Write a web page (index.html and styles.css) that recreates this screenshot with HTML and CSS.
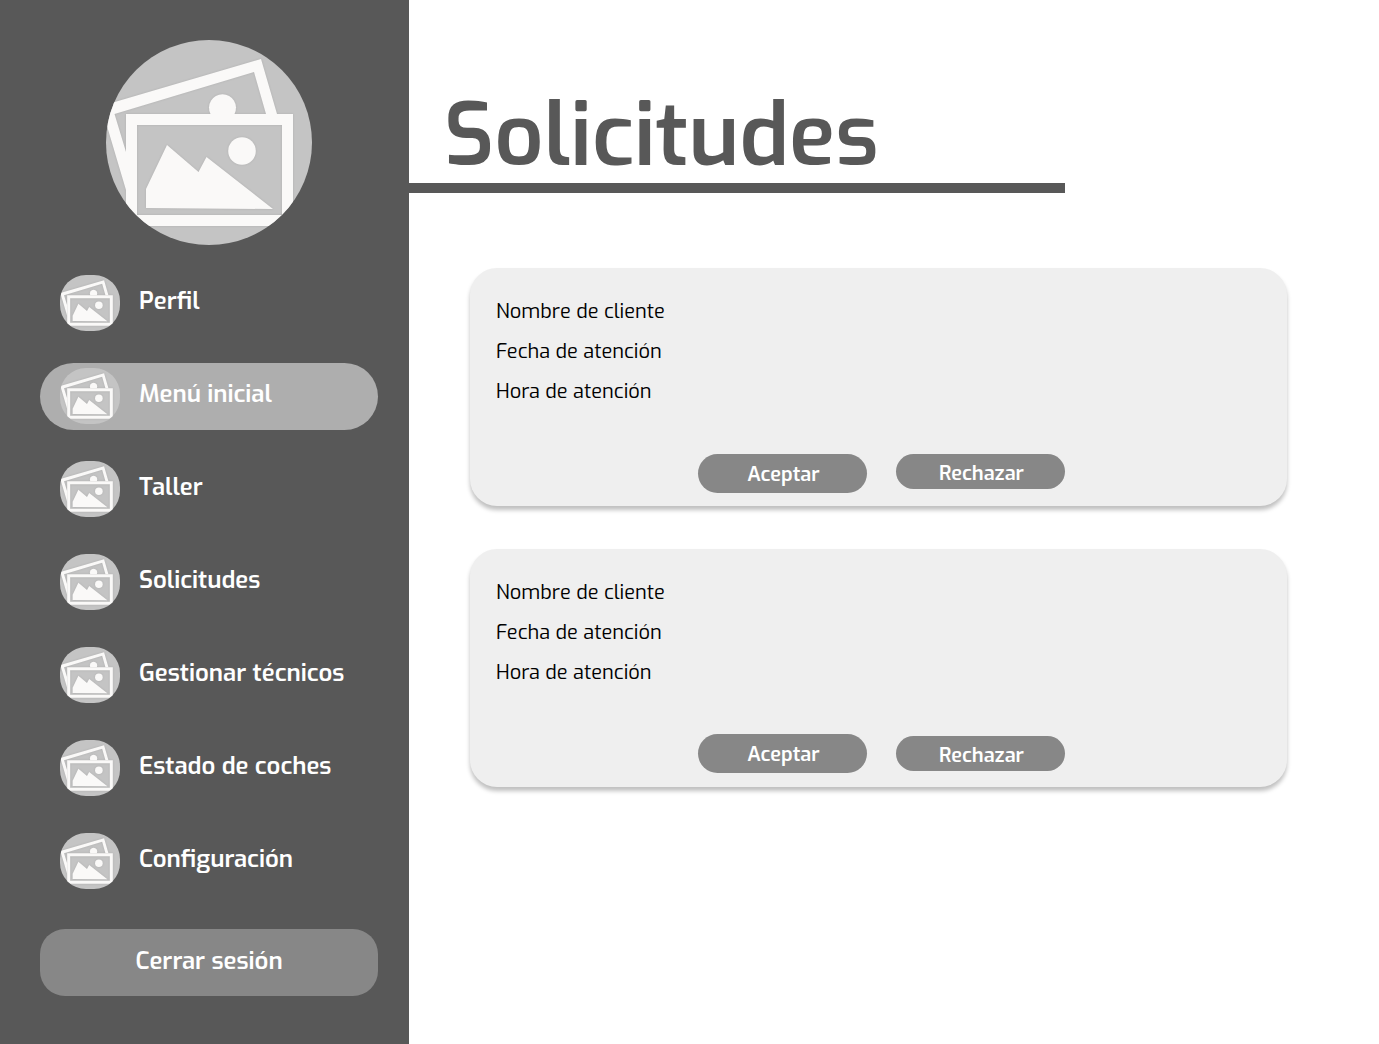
FILE: index.html
```html
<!DOCTYPE html>
<html lang="es">
<head>
<meta charset="utf-8">
<meta name="viewport" content="width=device-width, initial-scale=1">
<title>Solicitudes</title>
<link rel="stylesheet" href="styles.css">
</head>
<body>
<svg class="sprite" aria-hidden="true">
  <symbol id="pictures" viewBox="-6 0 219 205">
    <g fill="#faf9f8">
      <path fill-rule="evenodd" d="M-5 66 155 19 171 74H160L148 32 8.500 74 20 112V150Z"/>
      <path d="M104.500 74a13.500 13.500 0 1 1 24 0Z"/>
      <path fill-rule="evenodd" d="M20 74H187V186H20ZM31 85V175H176V85Z"/>
      <circle cx="136" cy="111" r="13.800"/>
      <path d="M61 105 92.500 132 100.500 117 167 169 40 168V149Z"/>
    </g>
  </symbol>
</svg>
<div class="layout">
  <aside class="sidebar">
    <div class="avatar">
      <svg class="avatar-picture" viewBox="0 0 206 205" role="img" aria-label="Foto de perfil"><use class="picture" href="#pictures" x="-6" y="0" width="219" height="205"/></svg>
    </div>
    <nav class="menu">
      <a class="menu-item" href="#perfil"><svg class="menu-icon"><use class="picture" href="#pictures"/></svg><span class="menu-label">Perfil</span></a>
      <a class="menu-item active" href="#menu"><svg class="menu-icon"><use class="picture" href="#pictures"/></svg><span class="menu-label">Menú inicial</span></a>
      <a class="menu-item" href="#taller"><svg class="menu-icon"><use class="picture" href="#pictures"/></svg><span class="menu-label">Taller</span></a>
      <a class="menu-item" href="#solicitudes"><svg class="menu-icon"><use class="picture" href="#pictures"/></svg><span class="menu-label">Solicitudes</span></a>
      <a class="menu-item" href="#tecnicos"><svg class="menu-icon"><use class="picture" href="#pictures"/></svg><span class="menu-label">Gestionar técnicos</span></a>
      <a class="menu-item" href="#coches"><svg class="menu-icon"><use class="picture" href="#pictures"/></svg><span class="menu-label">Estado de coches</span></a>
      <a class="menu-item" href="#configuracion"><svg class="menu-icon"><use class="picture" href="#pictures"/></svg><span class="menu-label">Configuración</span></a>
    </nav>
    <button class="logout" type="button">Cerrar sesión</button>
  </aside>
  <main class="content">
    <header class="heading">
      <h1 class="title">Solicitudes</h1>
    </header>
    <div class="requests">
      <article class="card">
        <p class="field">Nombre de cliente</p>
        <p class="field">Fecha de atención</p>
        <p class="field">Hora de atención</p>
        <div class="actions actions-top">
          <button class="button accept" type="button">Aceptar</button>
          <button class="button reject" type="button">Rechazar</button>
        </div>
      </article>
      <article class="card">
        <p class="field">Nombre de cliente</p>
        <p class="field">Fecha de atención</p>
        <p class="field">Hora de atención</p>
        <div class="actions">
          <button class="button accept" type="button">Aceptar</button>
          <button class="button reject" type="button">Rechazar</button>
        </div>
      </article>
    </div>
  </main>
</div>
</body>
</html>
```
FILE: styles.css
```css
* {
  box-sizing: border-box;
}

body {
  margin: 0;
  background: #fff;
  color: #000;
  font-family: Exo, "Exo 2", Roboto, "Liberation Sans", sans-serif;
}

button {
  border: 0;
  padding: 0;
  background: #878787;
  color: #fff;
  font-family: inherit;
  font-weight: 600;
  cursor: pointer;
}

.sprite {
  display: none;
}

.layout {
  display: flex;
  min-height: 100vh;
}

.sidebar {
  display: flex;
  flex: 0 0 409px;
  flex-direction: column;
  padding: 40px 31px 48px 40px;
  background: #585858;
}

.avatar {
  align-self: center;
  width: 206px;
  height: 205px;
  overflow: hidden;
  border-radius: 50%;
  background: #c4c4c4;
}

.avatar-picture {
  display: block;
  width: 100%;
  height: 100%;
}

.picture {
  filter: drop-shadow(0 0 1px rgba(0, 0, 0, 0.1));
}

.menu {
  display: flex;
  flex-direction: column;
  gap: 26px;
  margin-top: 25px;
}

.menu-item {
  display: flex;
  align-items: center;
  gap: 19px;
  height: 67px;
  padding: 0 20px 1px;
  border-radius: 34px;
  color: #fff;
  font-size: 24px;
  font-weight: 600;
  line-height: 32px;
  text-decoration: none;
}

.menu-item.active {
  background: #aeaeae;
}

.menu-icon {
  flex: none;
  width: 60px;
  height: 56px;
  border-radius: 26px;
  background: #c4c4c4;
}

.menu-label {
  padding-bottom: 4px;
}

.logout {
  height: 67px;
  margin-top: 34px;
  padding-bottom: 4px;
  border-radius: 25px;
  font-size: 24px;
}

.content {
  flex: 1;
  min-width: 0;
}

.heading {
  max-width: 656px;
  padding: 89px 0 0 35px;
  border-bottom: 10px solid #585858;
}

.title {
  margin: 0;
  color: #585858;
  font-size: 86px;
  font-weight: 600;
  line-height: 94px;
}

.requests {
  display: flex;
  flex-direction: column;
  gap: 43px;
  padding: 75px 92px 48px 61px;
}

.card {
  min-height: 238px;
  padding: 24px 20px 13px 26px;
  border-radius: 27px;
  background: #efefef;
  box-shadow: 0 4px 4px rgba(0, 0, 0, 0.25);
}

.field {
  margin: 0;
  font-size: 20px;
  line-height: 40px;
}

.actions {
  display: flex;
  align-items: center;
  justify-content: center;
  gap: 29px;
  margin-top: 41px;
}

.actions-top {
  align-items: flex-start;
  margin-top: 42px;
}

.button {
  width: 169px;
  border-radius: 20px;
  font-size: 20px;
}

.accept {
  height: 39px;
  padding: 2px 0 0 2px;
}

.reject {
  height: 35px;
  padding: 4px 0 0 2px;
}
```
